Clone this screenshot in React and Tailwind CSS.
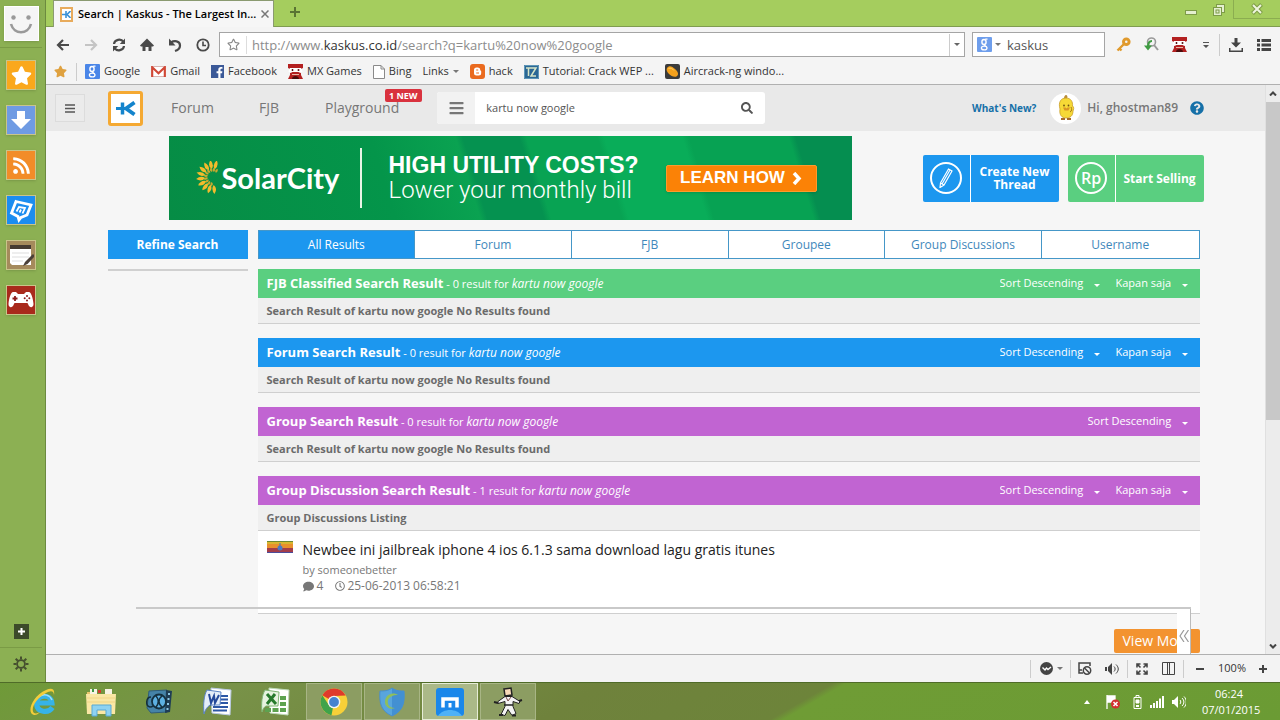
import {
  FaBars,
  FaComment,
  FaFacebookF,
  FaQuestionCircle,
  FaRegClock,
  FaRegStar,
  FaRss,
  FaSearch,
  FaStar,
} from "react-icons/fa"

function Caret({ className = "" }) {
  return (
    <svg viewBox="0 0 6 3" className={`w-[6px] h-[3px] shrink-0 ${className}`} fill="currentColor" aria-hidden="true">
      <path d="M0 0h6L3 3z" />
    </svg>
  )
}

function GoogleIcon({ className }) {
  return (
    <svg viewBox="0 0 15 15" className={className} aria-hidden="true">
      <rect width="15" height="15" rx="1" fill="#4a86e8" />
      <ellipse cx="7" cy="5" rx="2.1" ry="2.5" fill="none" stroke="#fff" strokeWidth="1.4" />
      <path d="M8.2 2.2h2.3M7.6 7.6c-.9.8 1.4 1.2 1.9 2.4" stroke="#fff" strokeWidth="1.2" fill="none" />
      <ellipse cx="7.2" cy="11" rx="2.8" ry="1.9" fill="none" stroke="#fff" strokeWidth="1.3" />
    </svg>
  )
}

function GmailIcon() {
  return (
    <svg viewBox="0 0 15 11" className="w-[15px] h-[11px]" aria-hidden="true">
      <rect x=".5" y=".5" width="14" height="10" fill="#fff" stroke="#d9b5b2" />
      <path d="M1.2 11V1.2l6.3 6 6.3-6V11" fill="none" stroke="#d14836" strokeWidth="2.1" />
    </svg>
  )
}

function MxIcon() {
  return (
    <svg viewBox="0 0 15 15" className="w-[15px] h-[15px]" aria-hidden="true">
      <path d="M0 0h15v4l-2 1v6l2 4H0l2-4V5L0 4z" fill="#b32020" />
      <path d="M2 4h11l1.5 3.5-2 1.5-2-1h-6l-2 1L.5 7.5z" fill="#fff" />
      <path d="M3.5 6h2M4.5 5v2" stroke="#5a1111" />
      <circle cx="10.5" cy="6" r="1" fill="#5a1111" />
      <path d="M4 15c0-4 7-4 7 0z" fill="#4a0c0c" />
      <path d="M4 10.5h7" stroke="#e9b9a8" />
    </svg>
  )
}

function PageIcon() {
  return (
    <svg viewBox="0 0 12 14" className="w-3 h-[14px]" fill="#fff" stroke="#8a8a8a" aria-hidden="true">
      <path d="M.5.5H8L11.5 4v9.5H.5zM8 .5V4h3.5" />
    </svg>
  )
}

function BloggerIcon() {
  return (
    <svg viewBox="0 0 15 15" className="w-[15px] h-[15px]" aria-hidden="true">
      <rect width="15" height="15" rx="3" fill="#ea6a1e" />
      <path d="M4 6a2.5 2.5 0 0 1 2.5-2.5H8A2.5 2.5 0 0 1 10.3 6c0 .8.9.6.9 1.4V9a2.5 2.5 0 0 1-2.5 2.5H6.5A2.5 2.5 0 0 1 4 9z" fill="#fff" />
      <path d="M6.2 6h2M6.2 9H9" stroke="#ea6a1e" strokeWidth="1.2" />
    </svg>
  )
}

function TutorialIcon() {
  return (
    <svg viewBox="0 0 15 14" className="w-[15px] h-[14px]" aria-hidden="true">
      <rect width="15" height="14" fill="#2b6795" />
      <path d="M2 3h10L7 11h5M4.5 3v8" stroke="#d7e6c8" strokeWidth="1.5" fill="none" />
      <path d="M.5.5h14v13H.5z" fill="none" stroke="#5e97b8" />
    </svg>
  )
}

function AircrackIcon() {
  return (
    <svg viewBox="0 0 15 15" className="w-[15px] h-[15px]" aria-hidden="true">
      <rect width="15" height="15" rx="2" fill="#3b3b3b" />
      <path d="M2 4c2-3 5-2 8 1s4 5 2 7-6 0-8-2-3-4-2-6z" fill="#f5a11c" />
      <path d="M3.5 4.5c2-1 4 0 5.5 2" stroke="#fcd36b" fill="none" />
    </svg>
  )
}

const bookmarks = [
  { text: "Google", icon: <GoogleIcon className="w-[15px] h-[15px]" /> },
  { text: "Gmail", icon: <GmailIcon /> },
  {
    text: "Facebook",
    icon: (
      <span className="w-[13px] h-[13px] bg-[#3b5998] flex items-end justify-end overflow-hidden">
        <FaFacebookF className="text-white w-[9px] h-[11px]" />
      </span>
    ),
  },
  { text: "MX Games", icon: <MxIcon /> },
  { text: "Bing", icon: <PageIcon /> },
  { text: "Links", folder: true },
  { text: "hack", icon: <BloggerIcon /> },
  { text: "Tutorial: Crack WEP ...", icon: <TutorialIcon /> },
  { text: "Aircrack-ng windo...", icon: <AircrackIcon /> },
]

const navIcons = [
  {
    name: "Back",
    art: <path d="M8 3L3 8l5 5M3.5 8H14" />,
  },
  {
    name: "Forward",
    muted: true,
    art: <path d="M8 3l5 5-5 5M12.5 8H2" />,
  },
  {
    name: "Reload",
    art: (
      <>
        <path d="M3 7c.5-4.500 7-6 9.500-2M13 9c-.5 4.500-7 6-9.500 2" />
        <path d="M14 1.500V7H8.800zM2 14.500V9h5.200z" fill="currentColor" stroke="none" />
      </>
    ),
  },
  {
    name: "Home",
    art: (
      <>
        <path d="M1 8.500L8 1.500l7 7-1 1H2z" fill="currentColor" stroke="none" />
        <path d="M3.500 9v5h3v-4h3v4h3V9z" fill="currentColor" stroke="none" />
      </>
    ),
  },
  {
    name: "Undo",
    art: (
      <>
        <path d="M4 5.500c3-2 9-2 9 3 0 3-2 4.500-5 5.500" />
        <path d="M2 1.500v7h6.500z" fill="currentColor" stroke="none" />
      </>
    ),
  },
  {
    name: "History",
    art: (
      <>
        <circle cx="8" cy="8" r="5.700" strokeWidth="1.800" />
        <path d="M8 4.500v4h3" strokeWidth="1.600" />
      </>
    ),
  },
]

function SideTile({ label, className, children }) {
  return (
    <button
      type="button"
      aria-label={label}
      className={`w-[30px] h-[30px] border border-[#c9c58a] shadow flex items-center justify-center ${className}`}
    >
      {children}
    </button>
  )
}

function SideBar() {
  return (
    <aside className="w-[46px] shrink-0 bg-[#8cb053] border-r border-[#6c8a3f] flex flex-col items-center pr-[3px]">
      <button type="button" aria-label="Account" className="mt-1.5 w-[35px] h-[35px] bg-[#f5f5f5] border border-white shadow flex items-center justify-center">
        <svg viewBox="0 0 30 30" className="w-[30px] h-[30px]">
          <circle cx="7.5" cy="8.5" r="2.2" fill="#999" />
          <circle cx="22.5" cy="8.5" r="2.2" fill="#999" />
          <path d="M5 15c3 11 17 11 20 0" fill="none" stroke="#999" strokeWidth="2.6" />
        </svg>
      </button>
      <div className="mt-[6px] mb-3 w-full h-px bg-[#7a9b45]" />
      <div className="flex flex-col gap-[15px]">
        <SideTile label="Favorites" className="bg-[#faa81c]">
          <FaStar className="text-white w-[21px] h-[21px]" />
        </SideTile>
        <SideTile label="Downloads" className="bg-[#6f9be3]">
          <svg viewBox="0 0 20 20" className="w-5 h-5" fill="#fff">
            <path d="M6 1h8v8h6L10 19 0 9h6z" />
          </svg>
        </SideTile>
        <SideTile label="RSS Reader" className="bg-[#f28c28]">
          <FaRss className="text-white w-[19px] h-[19px]" />
        </SideTile>
        <SideTile label="Sky Note" className="bg-[#1b8df0]">
          <svg viewBox="0 0 26 26" className="w-[26px] h-[26px]" fill="none" stroke="#fff">
            <path d="M8 4.500L23 8l-4 10-6 2.500-2 2.500-1-3.500L3.500 16z" strokeWidth="2.800" />
            <path d="M8.500 14.500L11 10l6 1-2.500 5.500M11.500 15.500l1.500-3" strokeWidth="1.800" />
          </svg>
        </SideTile>
        <SideTile label="Notes" className="bg-[#a58a5c]">
          <svg viewBox="0 0 26 26" className="w-[26px] h-[26px]">
            <path d="M2 4h21v19H4l-2-2z" fill="#fff" />
            <path d="M2 3h21v4H2z" fill="#453a32" />
            <path d="M4 11h17M4 15h17M4 19h11" stroke="#ddd" />
            <path d="M25 12l-8 8-2 4 4.500-2 7.500-8z" fill="#4b4038" />
          </svg>
        </SideTile>
        <SideTile label="Games" className="bg-[#a92a1c]">
          <svg viewBox="0 0 26 20" className="w-[26px] h-5">
            <path d="M5 2h3l2 2h6l2-2h3c2 0 4 6 4.500 12 0 4-4 4-5 1l-1-2h-13l-1 2c-1 3-5 3-5-1C1 8 3 2 5 2z" fill="#fff" />
            <path d="M4.500 8.500h5M7 6v5" stroke="#8c1d1d" strokeWidth="1.800" />
            <g fill="#8c1d1d">
              <circle cx="19" cy="6" r="1" />
              <circle cx="19" cy="10.500" r="1" />
              <circle cx="16.700" cy="8.300" r="1" />
              <circle cx="21.300" cy="8.300" r="1" />
            </g>
          </svg>
        </SideTile>
      </div>
      <button type="button" aria-label="Add" className="mt-auto w-[15px] h-[15px] bg-[#3c4a2a] flex items-center justify-center">
        <svg viewBox="0 0 9 9" className="w-[9px] h-[9px]" stroke="#fff" strokeWidth="2">
          <path d="M1 4.500h7M4.500 1v7" />
        </svg>
      </button>
      <div className="mt-2 w-full h-px bg-[#7a9b45]" />
      <button type="button" aria-label="Settings" className="mt-2 mb-[10px] h-4">
        <svg viewBox="0 0 16 16" className="w-4 h-4" fill="none" stroke="#46502f">
          <circle cx="8" cy="8" r="3.900" strokeWidth="1.800" />
          <path
            d="M8 .5v3M8 12.500v3M.5 8h3M12.500 8h3M2.700 2.700l2.100 2.100M11.200 11.200l2.100 2.100M13.300 2.700l-2.100 2.100M4.800 11.200l-2.100 2.100"
            strokeWidth="2"
          />
        </svg>
      </button>
    </aside>
  )
}

function TitleBar() {
  return (
    <div className="h-[27px] bg-[#a5cd5e] flex items-stretch">
      <div className="w-[7px] border-b border-[#7f9c50]" />
      <div className="w-[221px] bg-[#f6f6f6] border-x border-t border-[#8a9a70] flex items-center pl-1.5 pr-2 gap-[5px]">
        <span className="w-[15px] h-[15px] border-2 border-[#e8ab5c] bg-white flex items-center justify-center">
          <svg viewBox="0 0 9 7" className="w-[9px] h-[7px]" fill="none" stroke="#3c92d6" strokeWidth="1.600">
            <path d="M0 3.500h5M4 0v7M8.500 0L5 3.500 8.500 7" />
          </svg>
        </span>
        <span className="flex-1 text-[11px] font-semibold text-black whitespace-nowrap">Search | Kaskus - The Largest In...</span>
        <button type="button" aria-label="Close tab" className="text-[#777]">
          <svg viewBox="0 0 8 8" className="w-2 h-2" stroke="currentColor" strokeWidth="1.500">
            <path d="M.5.5l7 7M7.500.5l-7 7" />
          </svg>
        </button>
      </div>
      <div className="flex-1 border-b border-[#7f9c50] flex items-start">
        <button type="button" aria-label="New tab" className="ml-4 mt-[7px]">
          <svg viewBox="0 0 10 10" className="w-[10px] h-[10px]" stroke="#5a7433" strokeWidth="2">
            <path d="M0 5h10M5 0v10" />
          </svg>
        </button>
        <div className="ml-auto flex items-start text-[#7d9b48]">
          <button type="button" aria-label="Minimize" className="mt-[10px] mr-4 w-3 h-[5px] border border-[#7d9b48] bg-[#e4efcf]" />
          <button type="button" aria-label="Restore" className="mt-1 mr-2">
            <svg viewBox="0 0 12 12" className="w-3 h-3" fill="#e4efcf" stroke="currentColor">
              <rect x="3.500" y=".5" width="8" height="8" />
              <rect x=".5" y="3.500" width="8" height="8" />
              <rect x="3" y="6" width="3" height="3" />
            </svg>
          </button>
          <button type="button" aria-label="Close window" className="w-[47px] h-[19px] border-l border-b border-[#8bad50] flex items-center justify-center">
            <svg viewBox="0 0 12 12" className="w-3 h-3">
              <path d="M1.500 1.500l9 9M10.500 1.500l-9 9" stroke="#7d9b48" strokeWidth="4" />
              <path d="M2 2l8 8M10 2l-8 8" stroke="#eef6dd" strokeWidth="2" />
            </svg>
          </button>
        </div>
      </div>
    </div>
  )
}

function ToolBar() {
  return (
    <div className="h-8 flex items-center pt-[3px] pl-[9px] pr-[9px] text-[#444]">
      <div className="flex items-center gap-3 mr-2">
        {navIcons.map((item) => (
          <button key={item.name} type="button" aria-label={item.name} className={item.muted ? "text-[#c4c4c4]" : "text-[#4a4a4a]"}>
            <svg viewBox="0 0 16 16" className="w-4 h-4" fill="none" stroke="currentColor" strokeWidth="2.200">
              {item.art}
            </svg>
          </button>
        ))}
      </div>
      <div className="flex-1 h-[25px] bg-white border border-[#a5a5a5] flex items-center">
        <button type="button" aria-label="Bookmark this page" className="w-[26px] flex justify-center text-[#888]">
          <FaRegStar className="w-[13px] h-[13px]" />
        </button>
        <div className="w-px h-[18px] bg-[#ddd]" />
        <a href="#url" className="flex-1 pl-[5px] text-[13px] leading-5 text-[#8c8c8c] whitespace-nowrap">
          http://www.<span className="text-[#333]">kaskus.co.id</span>/search?q=kartu%20now%20google
        </a>
        <button type="button" aria-label="Show addresses" className="w-[15px] h-[22px] border-l border-[#ccc] flex items-center justify-center text-[#666]">
          <Caret />
        </button>
      </div>
      <div className="ml-[7px] w-[133px] h-[25px] bg-white border border-[#a5a5a5] flex items-center pl-1">
        <GoogleIcon className="w-[15px] h-[15px] opacity-80" />
        <Caret className="ml-[3px] text-[#777]" />
        <input
          aria-label="Web search"
          defaultValue="kaskus"
          className="pl-[6px] min-w-0 flex-1 bg-transparent text-[13px] leading-5 text-[#555] outline-none"
        />
      </div>
      <div className="ml-[11px] flex items-center">
        <button type="button" aria-label="Passwords" className="mr-[13px]">
          <svg viewBox="0 0 15 15" className="w-[15px] h-[15px]" fill="none" stroke="#e09a2d">
            <circle cx="10.300" cy="4.700" r="2.800" strokeWidth="3" />
            <path d="M8 7l-6.500 6.500M3.500 11.500l2 2" strokeWidth="2.400" />
          </svg>
        </button>
        <button type="button" aria-label="Find resources" className="mr-[13px]">
          <svg viewBox="0 0 15 15" className="w-[15px] h-[15px]" fill="none">
            <circle cx="7.500" cy="5" r="4" stroke="#999" strokeWidth="1.600" />
            <path d="M10 8l4 5" stroke="#999" strokeWidth="2" />
            <path d="M8 4C5 4 4 6 4 10" stroke="#3f9b42" strokeWidth="2.200" />
            <path d="M0 8.500h8l-4 5z" fill="#3f9b42" />
          </svg>
        </button>
        <button type="button" aria-label="MX Games" className="mr-4">
          <MxIcon />
        </button>
        <button type="button" aria-label="More tools" className="mr-[10px]">
          <svg viewBox="0 0 6 6" className="w-1.5 h-1.5" fill="#555">
            <path d="M0 0h6v1H0zM0 3h6L3 6z" />
          </svg>
        </button>
        <div className="w-px h-[22px] bg-[#ccc] mr-[9px]" />
        <button type="button" aria-label="Download" className="mr-[14px]">
          <svg viewBox="0 0 14 14" className="w-[14px] h-[14px]" fill="#444">
            <path d="M5.500 0h3v4.500H12l-5 5-5-5h3.500zM0 10h1.500v2.500h11V10H14v4H0z" />
          </svg>
        </button>
        <button type="button" aria-label="Menu">
          <svg viewBox="0 0 14 12" className="w-[14px] h-3" fill="#444">
            <path d="M0 0h3v3H0zM4.500 0H14v3H4.500zM0 4.500h3v3H0zM4.500 4.500H14v3H4.500zM0 9h3v3H0zM4.500 9H14v3H4.500z" />
          </svg>
        </button>
      </div>
    </div>
  )
}

function BookmarkBar() {
  return (
    <div className="h-[25px] flex items-center pl-2 text-[11px] text-[#333]">
      <FaStar className="text-[#dfa13f] w-[13px] h-[13px]" />
      <div className="ml-[9px] mr-2 w-px h-[18px] bg-[#ccc]" />
      <nav className="flex items-center gap-[11px]">
        {bookmarks.map((item) => (
          <a key={item.text} href="#bookmark" className="flex items-center gap-1 whitespace-nowrap">
            {item.icon}
            {item.text}
            {item.folder && <Caret className="text-[#777]" />}
          </a>
        ))}
      </nav>
    </div>
  )
}

function SiteHeader() {
  return (
    <header className="h-[46px] bg-[#e9e9e9] flex items-center pl-[9px] pr-[61px] text-[#777]">
      <button type="button" aria-label="Menu" className="w-[30px] h-[28px] border border-[#dcdcdc] bg-[#ebebeb] flex items-center justify-center">
        <svg viewBox="0 0 10 9" className="w-[10px] h-[9px]" stroke="#555" strokeWidth="1.400">
          <path d="M0 1h10M0 4.500h10M0 8h10" />
        </svg>
      </button>
      <a href="#home" aria-label="Kaskus" className="ml-[23px] w-[35px] h-[35px] rounded-[3px] border-[3px] border-[#f5a932] bg-white flex items-center justify-center">
        <svg viewBox="0 0 20 15" className="w-5 h-[15px]" fill="none" stroke="#1484cc">
          <path d="M0 7.500h9" strokeWidth="3" />
          <path d="M6.500 1.500v12" strokeWidth="3.500" />
          <path d="M18.500 1.500L10 7.500l8.500 6" strokeWidth="3.800" />
        </svg>
      </a>
      <nav className="ml-7 flex items-center text-[14px] leading-none">
        <a href="#forum" className="w-[88px]">Forum</a>
        <a href="#fjb" className="w-[66px]">FJB</a>
        <a href="#playground" className="relative">
          Playground
          <span className="absolute left-[60px] -top-3 h-[13px] px-1 rounded-[2px] bg-[#d9323e] text-white text-[9px] leading-[13px] font-bold whitespace-nowrap">
            1 NEW
          </span>
        </a>
      </nav>
      <form className="ml-[38px] w-[328px] h-8 rounded-[3px] bg-white flex items-center overflow-hidden" onSubmit={(e) => e.preventDefault()}>
        <button type="button" aria-label="Categories" className="w-[38px] h-full bg-[#f2f2f2] flex items-center justify-center">
          <FaBars className="w-[15px] h-4 text-[#777]" />
        </button>
        <input
          aria-label="Search Kaskus"
          defaultValue="kartu now google"
          className="flex-1 min-w-0 pl-[11px] text-[11px] text-[#555] outline-none"
        />
        <button type="submit" aria-label="Search" className="mr-3">
          <FaSearch className="w-3 h-3 text-[#555]" />
        </button>
      </form>
      <div className="ml-auto flex items-center">
        <a href="#new" className="text-[10px] font-bold text-[#1670a8]">What's New?</a>
        <span className="ml-[14px] w-[31px] h-[31px] rounded-full bg-white flex items-center justify-center">
          <svg viewBox="0 0 20 26" className="w-5 h-[26px]">
            <path d="M8 4c0-3 1-4 2-4s2 1 1 4z" fill="#b98c3c" />
            <path d="M4 14C2 7 5 3 10 3s7 4 6.500 8c2 1 1 4 .5 5 0 5-3 7-7 7s-7-3-6-9z" fill="#f6d936" stroke="#c99d28" strokeWidth=".8" />
            <path d="M7 12.500h2.500l1 1 1-1H14l-1.500 3h-4z" fill="#d99525" />
            <circle cx="8" cy="10.500" r=".9" fill="#6e5314" />
            <circle cx="12.500" cy="10.500" r=".9" fill="#6e5314" />
            <path d="M14 17c2-1 2-3 1-5" fill="none" stroke="#a5781d" />
            <path d="M5 24h4M11 24h4" stroke="#a76b2a" strokeWidth="2" />
          </svg>
        </span>
        <a href="#profile" className="ml-[6px] text-[12px] leading-4 font-semibold">Hi, ghostman89</a>
        <FaQuestionCircle className="ml-3 w-[14px] h-[14px] text-[#1670a8]" />
      </div>
    </header>
  )
}

const petals = [85, 107, 129, 151, 173, 195, 217, 239, 261, 283]

function SunLogo() {
  return (
    <svg viewBox="0 0 32 34" className="w-8 h-[34px] shrink-0" aria-hidden="true">
      {petals.map((angle) => (
        <g key={angle} transform={`rotate(${angle} 20 16)`}>
          <path d="M28 16q4-4 9 0-5 3.500-9 0z" fill="#f3bb2c" />
          <path d="M25 16.800q2-2.800 4.500 0-2.500 2-4.500 0z" fill="#c9a92f" transform="rotate(11 20 16)" />
        </g>
      ))}
    </svg>
  )
}

function Banner() {
  return (
    <a
      href="#ad"
      className="w-[683px] h-[84px] overflow-hidden flex items-center pl-6 pr-[35px] bg-[linear-gradient(73deg,#068c45_0%,#04954a_32%,#0aa251_44%,#059250_45%,#059250_53%,#08a353_54%,#08a353_64%,#09ad59_65%,#09ad59_76%,#07a253_77%,#07a253_91%,#058e50_92%)] text-white"
    >
      <SunLogo />
      <span className="-ml-[3px] font-['Lato',sans-serif] font-bold text-[29px] leading-[34px] w-[113px] whitespace-nowrap">SolarCity</span>
      <span className="ml-[25px] w-[2px] h-[60px] bg-[#e9f5e6]" />
      <span className="ml-[27px] flex flex-col font-['Liberation_Sans',sans-serif] whitespace-nowrap">
        <span className="text-[23px] leading-[25px] font-bold">HIGH UTILITY COSTS?</span>
        <span className="text-[24px] leading-[25px] font-['Roboto',sans-serif] font-light">Lower your monthly bill</span>
      </span>
      <span className="ml-auto w-[151px] h-[27px] rounded-[2px] bg-[#fb8206] shadow border border-[#fd9a2c] flex items-center justify-center gap-[7px] font-['Liberation_Sans',sans-serif] font-bold text-[17px] whitespace-nowrap">
        LEARN HOW
        <svg viewBox="0 0 10 13" className="w-[10px] h-[13px]" fill="none" stroke="#fff" strokeWidth="3.500">
          <path d="M2 1l5 5.500L2 12" />
        </svg>
      </span>
    </a>
  )
}

function ActionButton({ className, icon, children }) {
  return (
    <button type="button" className={`w-[136px] h-[47px] rounded-[2px] text-white flex items-stretch ${className}`}>
      <span className="w-12 border-r border-white flex items-center justify-center">
        <span className="w-8 h-8 rounded-full border-2 border-white flex items-center justify-center text-[16px] font-semibold">{icon}</span>
      </span>
      <span className="flex-1 flex items-center justify-center text-center text-[12px] leading-[13px] font-bold">{children}</span>
    </button>
  )
}

const tabs = ["All Results", "Forum", "FJB", "Groupee", "Group Discussions", "Username"]

function FilterSelect({ label, value }) {
  return (
    <label className="flex items-center">
      <select aria-label={label} className="appearance-none bg-transparent outline-none" defaultValue={value}>
        <option>{value}</option>
      </select>
      <Caret className="ml-[10px] mt-[3px]" />
    </label>
  )
}

function ResultPanel({ title, count, color, note, period = true, children }) {
  return (
    <section className="mb-[14px]">
      <div className={`h-[29px] pl-[9px] pr-3 flex items-center text-white ${color}`}>
        <h2 className="text-[12px] leading-5">
          <strong className="text-[13px] font-bold">{title}</strong>
          <span className="text-[11px]"> - {count} result for </span>
          <em>kartu now google</em>
        </h2>
        <div className="ml-auto flex gap-4 text-[11px]">
          <FilterSelect label={`${title} order`} value="Sort Descending" />
          {period && <FilterSelect label={`${title} period`} value="Kapan saja" />}
        </div>
      </div>
      <p className="h-[26px] leading-[25px] pl-[9px] bg-[#efefef] border-b border-[#cfcfcf] text-[11px] font-bold text-[#6b6b6b]">{note}</p>
      {children}
    </section>
  )
}

function SearchPage() {
  const emptyNote = "Search Result of kartu now google No Results found"

  return (
    <div className="relative flex-1 min-w-0 bg-[#f6f6f6] overflow-hidden">
      <SiteHeader />
      <main className="max-w-[1096px] mx-auto pt-[5px]">
        <div className="flex items-center pl-[61px]">
          <Banner />
          <div className="ml-auto flex gap-[9px]">
            <ActionButton
              className="bg-[#1c97ef]"
              icon={
                <svg viewBox="0 0 14 20" className="w-[14px] h-5" fill="none" stroke="#fff" strokeWidth="1.200">
                  <path d="M9.500 1l3.500 2-8 14-4 2.500.5-4.500zM11 2L3 16M1.500 15L5 17" />
                </svg>
              }
            >
              Create New Thread
            </ActionButton>
            <ActionButton className="bg-[#5acf80]" icon="Rp">Start Selling</ActionButton>
          </div>
        </div>
        <div className="mt-[10px] pr-1 flex gap-[10px]">
          <div className="w-[140px] shrink-0">
            <h1 className="h-[29px] leading-[29px] bg-[#1c97ef] text-white text-[12px] font-bold text-center">Refine Search</h1>
            <div className="mt-[10px] h-0.5 bg-[#d0d0d0]" />
          </div>
          <div className="flex-1 min-w-0">
            <nav className="grid grid-cols-6 h-[29px] border border-[#4597c8] divide-x divide-[#4597c8] bg-white text-[12px] text-center leading-[27px]">
              {tabs.map((tab, i) => (
                <a key={tab} href="#tab" className={i === 0 ? "bg-[#1c97ef] text-white" : "text-[#3f88bb]"}>
                  {tab}
                </a>
              ))}
            </nav>
            <div className="mt-[10px]">
              <ResultPanel title="FJB Classified Search Result" count={0} color="bg-[#5acf80]" note={emptyNote} />
              <ResultPanel title="Forum Search Result" count={0} color="bg-[#1c97ef]" note={emptyNote} />
              <ResultPanel title="Group Search Result" count={0} color="bg-[#c164d2]" note={emptyNote} period={false} />
              <ResultPanel title="Group Discussion Search Result" count={1} color="bg-[#c164d2]" note="Group Discussions Listing">
                <article className="h-[83px] pl-[9px] pt-[10px] bg-white border-b border-[#cfcfcf] flex gap-[10px]">
                  <svg viewBox="0 0 26 12" className="w-[26px] h-3" aria-hidden="true">
                    <rect width="26" height="12" fill="#e8902c" />
                    <rect width="26" height="3" fill="#d8b52f" />
                    <rect y="7" width="26" height="5" fill="#a33d4a" />
                    <rect y="11" width="26" height="1" fill="#4b4c9b" />
                    <path d="M0 0h26v1H0z" fill="#6a8a35" />
                    <circle cx="13" cy="7" r="2.500" fill="#4a79c4" />
                    <path d="M13 2v3" stroke="#3d70bf" />
                  </svg>
                  <div className="text-[#777] text-[11px] leading-4">
                    <h3 className="text-[14px] leading-[18px] text-[#222]">
                      <a href="#thread">Newbee ini jailbreak iphone 4 ios 6.1.3 sama download lagu gratis itunes</a>
                    </h3>
                    <p className="mt-[3px]">by someonebetter</p>
                    <p className="flex items-center text-[12px]">
                      <FaComment className="w-[11px] h-[11px] mr-[3px]" />4
                      <FaRegClock className="w-[10px] h-[10px] ml-3 mr-0.5" />
                      25-06-2013 06:58:21
                    </p>
                  </div>
                </article>
              </ResultPanel>
            </div>
            <div className="flex justify-end pt-px">
              <button type="button" className="w-[86px] h-6 pl-[9px] rounded-[2px] bg-[#f39330] text-white text-[14px] text-left leading-6">
                View More
              </button>
            </div>
          </div>
        </div>
      </main>
      {/* collapsed toolbar of the site, floats over the results */}
      <div className="absolute bottom-0 left-[90px] right-[74px] h-[47px] border-t-2 border-[#c9c9c9] flex justify-end pointer-events-none">
        <button type="button" aria-label="Expand toolbar" className="w-[14px] bg-white border-r border-[#bbb] flex items-center justify-center pt-2">
          <svg viewBox="0 0 10 12" className="w-[10px] h-3" fill="none" stroke="#999" strokeWidth="1.200">
            <path d="M5 0L1 6l4 6M9.500 0l-4 6 4 6" />
          </svg>
        </button>
      </div>
    </div>
  )
}

function ScrollBar() {
  return (
    <div className="w-[15px] shrink-0 bg-[#ececec] border-l border-[#e0e0e0] flex flex-col items-center text-[#444]">
      <svg viewBox="0 0 8 5" className="w-2 h-[5px] my-[6px]" fill="none" stroke="currentColor" strokeWidth="2">
        <path d="M1 4.500l3-3 3 3" />
      </svg>
      <div className="w-full h-[318px] bg-[#c8c8c8]" />
      <svg viewBox="0 0 8 5" className="w-2 h-[5px] mt-auto mb-[5px]" fill="none" stroke="currentColor" strokeWidth="2">
        <path d="M1 .5l3 3 3-3" />
      </svg>
    </div>
  )
}

function StatusBar() {
  return (
    <div className="h-7 bg-[#f3f3f3] border-t border-[#b0b0b0] flex items-center justify-end pr-[13px] text-[#444]">
      <div className="w-px h-[18px] bg-[#ccc] mr-[9px]" />
      <button type="button" aria-label="Network boost" className="flex items-center gap-1">
        <svg viewBox="0 0 13 13" className="w-[13px] h-[13px]">
          <circle cx="6.500" cy="6.500" r="6.500" fill="#444" />
          <path d="M2.500 5.500L5 8l1.500-2 1.500 1.500L11 5" fill="none" stroke="#fff" strokeWidth="1.400" />
        </svg>
        <Caret className="text-[#777]" />
      </button>
      <div className="w-px h-[18px] bg-[#ccc] mx-[7px]" />
      <button type="button" aria-label="Ad blocker" className="mr-[13px]">
        <svg viewBox="0 0 14 13" className="w-[14px] h-[13px]" fill="none" stroke="currentColor" strokeWidth="1.500">
          <path d="M12 4V1H1v10h4M1 8h3" />
          <circle cx="9" cy="8.500" r="3.700" />
          <path d="M6.500 6l5 5" />
        </svg>
      </button>
      <button type="button" aria-label="Sound">
        <svg viewBox="0 0 14 12" className="w-[14px] h-3" fill="none" stroke="currentColor">
          <path d="M0 4h2v4H0zM3 4l4-4v12L3 8z" fill="currentColor" stroke="none" />
          <path d="M9 3.500c1.500 1.500 1.500 3.500 0 5M11 1.500c3 3 3 6 0 9" />
        </svg>
      </button>
      <div className="w-px h-[18px] bg-[#ccc] mx-2" />
      <button type="button" aria-label="Full screen" className="mr-[14px]">
        <svg viewBox="0 0 12 12" className="w-3 h-3" fill="none" stroke="currentColor" strokeWidth="1.600">
          <path d="M1 4.500V1h3.500M7.500 1H11v3.500M11 7.500V11H7.500M4.500 11H1V7.500M1 1l3.500 3.500M11 1L7.500 4.500M11 11L7.500 7.500M1 11l3.500-3.500" />
        </svg>
      </button>
      <button type="button" aria-label="Split screen">
        <svg viewBox="0 0 13 13" className="w-[13px] h-[13px]" fill="none" stroke="currentColor">
          <path d="M.5.5h12v12H.5zM5.500.5v12M7.500.5v12" />
        </svg>
      </button>
      <div className="w-px h-[18px] bg-[#ccc] ml-2 mr-3" />
      <button type="button" aria-label="Zoom out">
        <svg viewBox="0 0 8 8" className="w-2 h-2" stroke="currentColor" strokeWidth="2">
          <path d="M0 4h8" />
        </svg>
      </button>
      <span className="w-[48px] ml-1 mr-[3px] text-center text-[11px] text-[#333]">100%</span>
      <button type="button" aria-label="Zoom in">
        <svg viewBox="0 0 8 8" className="w-2 h-2" stroke="currentColor" strokeWidth="2">
          <path d="M0 4h8M4 0v8" />
        </svg>
      </button>
    </div>
  )
}

function ExplorerLogo() {
  return (
    <svg viewBox="0 0 30 30" className="w-[30px] h-[30px]">
      <path d="M24.500 20.500c-4 6-15.500 5-16-3.500C8 7.500 23 6 24 16H11" fill="none" stroke="#36b3e8" strokeWidth="5" />
      <path d="M24 13c-2-5-8-7-13-3" fill="none" stroke="#9fe0fa" strokeWidth="1.500" />
      <path d="M6 28C-2 26 4 9 18 3c6-2.500 9-1 8 5-.5-5-4-4-8-2C8 11 2 22 6 26c2 1 4 0 6-1-2 2-4 3.500-6 3z" fill="#f3cd3a" />
    </svg>
  )
}

function FolderLogo() {
  return (
    <svg viewBox="0 0 30 30" className="w-[30px] h-[30px]">
      <path d="M1 5h8l2 2h18v20H1z" fill="#e8c66e" />
      <path d="M4 2h7v5H4zM19 2h7v5h-7z" fill="#f7f3e4" />
      <path d="M12 3h3v3h-3z" fill="#cf3d2e" />
      <path d="M6 2h2v3H6z" fill="#3c9b45" />
      <path d="M0 7h30l-1 20H1z" fill="#fae7a5" />
      <path d="M1 11h28M1 15h28" stroke="#f0d585" />
      <path d="M6 29V18h19v11h-5v-6h-9v6z" fill="#8ed2f1" stroke="#58a9d4" />
    </svg>
  )
}

function MediaLogo() {
  return (
    <svg viewBox="0 0 28 28" className="w-7 h-7">
      <path d="M4 3l18-1v22l-16 1-4-5z" fill="#4583a8" stroke="#2f5c78" />
      <path d="M21 2l6 1-2 21-5 1z" fill="#1f3d55" />
      <path d="M23 5h2v2h-2zM22.500 10h2v2h-2zM22 15h2v2h-2zM21.500 20h2v2h-2z" fill="#8cc6e2" />
      <circle cx="14" cy="13.500" r="7" fill="#5db0e2" stroke="#14303f" strokeWidth="1.800" />
      <path d="M6 9c-5 0-6 9-1 10 2 0 3-1 3-1M17 8c-4 3-4 8 0 11M11 8c3 3 3 8 0 11" fill="none" stroke="#14303f" strokeWidth="1.500" />
    </svg>
  )
}

function OfficeLogo({ color, children }) {
  return (
    <svg viewBox="0 0 30 30" className="w-[30px] h-[30px]">
      <path d="M9 1l20 2-1 25-18-2z" fill="#fff" stroke={color} />
      {children}
    </svg>
  )
}

function ChromeLogo() {
  return (
    <svg viewBox="0 0 28 28" className="w-7 h-7">
      <circle cx="14" cy="14" r="13.500" fill="#f7d038" />
      <path d="M14 14L2.300 7.200A13.500 13.500 0 0 1 25.700 7.500L14 8z" fill="#df3a2c" />
      <path d="M14 14l-2.500 13.200A13.500 13.500 0 0 1 2.300 7.200l6.500 9.800 6 3z" fill="#3fa34a" />
      <circle cx="14" cy="14" r="6.300" fill="#f4f4f4" />
      <circle cx="14" cy="14" r="4.900" fill="#4582cf" />
    </svg>
  )
}

function ShieldLogo() {
  return (
    <svg viewBox="0 0 28 30" className="w-7 h-[30px]">
      <path d="M14 1c4 3 8 3 12 3 1 12-1 20-12 25C3 24 1 16 2 4c4 0 8 0 12-3z" fill="#58a5dd" stroke="#4a8fcb" />
      <path d="M14 1c4 3 8 3 12 3 1 12-1 20-12 25z" fill="#4390d2" />
      <path d="M20 8c-7-4-13 1-13 7 0 5 5 8 10 6-6 0-8-4-7-8 1-3 5-5 10-5z" fill="#8fbf5c" />
    </svg>
  )
}

function MaxthonLogo() {
  return (
    <svg viewBox="0 0 28 28" className="w-7 h-7">
      <rect width="28" height="28" rx="3" fill="#1a87ea" />
      <path d="M2 28c5-8 19-8 24 0z" fill="#4eb1f7" />
      <path d="M7 19.500V11h14v8.500" fill="none" stroke="#fff" strokeWidth="3.500" />
      <path d="M14 15v4.500" stroke="#fff" strokeWidth="3" />
    </svg>
  )
}

function KarateLogo() {
  return (
    <svg viewBox="0 0 30 30" className="w-[30px] h-[30px]">
      <path d="M11 2l7-1 1 7-7 1z" fill="#f7d9b8" stroke="#222" strokeWidth="1.500" />
      <path d="M12 9.500h7l8 5-1 2-6-2v5l3 7-4 2-4-6-3 6-4-1 4-8v-5l-7 2v-2z" fill="#f3f3f3" stroke="#222" />
      <path d="M11 18h9" stroke="#222" strokeWidth="1.500" />
      <path d="M13 10l2 4 3-4" fill="none" stroke="#7c4c4c" />
      <path d="M1 15l4 1M26 14l3-1M6 28h4M19 28.500h4" stroke="#222" strokeWidth="2" />
    </svg>
  )
}

const pinned = [
  { name: "Internet Explorer", logo: <ExplorerLogo /> },
  { name: "File Explorer", logo: <FolderLogo /> },
  { name: "Media Player", logo: <MediaLogo /> },
  {
    name: "Word",
    logo: (
      <OfficeLogo color="#b9c9e2">
        <path d="M18 9h8M18 12.500h8M18 16h8M11 20h15M11 23.500h14" stroke="#2c57a5" strokeWidth="1.800" />
        <path d="M5 3l14 2-1 13H8c-3 2-5 5-6 9C1 17 2 8 5 3z" fill="#e4edf8" stroke="#5b83c4" />
        <path d="M7 7l2 9 3-7 1 7 4-8" fill="none" stroke="#24499a" strokeWidth="2" />
      </OfficeLogo>
    ),
  },
  {
    name: "Excel",
    logo: (
      <OfficeLogo color="#bcd9b5">
        <path d="M20 9h6v4h-6zM20 15h6v4h-6zM5 21h6v4H5zM12.500 21h6v4h-6zM20 21h6v4h-6z" fill="#5da24f" />
        <path d="M5 3l14 2-1 14H6c-2 1-3 3-4 6C1 16 2 8 5 3z" fill="#e6f3df" stroke="#7fb573" />
        <path d="M7 7l9 10M15 7l-8 10" stroke="#277a2c" strokeWidth="3" />
      </OfficeLogo>
    ),
  },
]

const running = [
  { name: "Chrome", logo: <ChromeLogo /> },
  { name: "Shield", logo: <ShieldLogo /> },
  { name: "Maxthon", logo: <MaxthonLogo />, active: true },
  { name: "Karate", logo: <KarateLogo /> },
]

function TaskBar() {
  return (
    <footer className="h-[38px] shrink-0 border-t border-[#4f6b28] bg-[linear-gradient(150deg,#6f9a38_0%,#789248_18%,#6f823c_45%,#6d843a_62%,#6f9c35_63%,#6b9b34_100%)] flex items-stretch text-white">
      <div className="flex items-center gap-[28px] pl-7">
        {pinned.map((app) => (
          <button key={app.name} type="button" aria-label={app.name} className="w-[30px] flex justify-center">
            {app.logo}
          </button>
        ))}
      </div>
      <div className="flex gap-[2px] ml-4">
        {running.map((app) => (
          <button
            key={app.name}
            type="button"
            aria-label={app.name}
            className={`w-14 border flex items-center justify-center ${
              app.active ? "bg-[#abb988] border-[#e6ecd6]" : "bg-[#8c9d62] border-[#a8b585]"
            }`}
          >
            {app.logo}
          </button>
        ))}
      </div>
      <div className="ml-auto flex items-center pr-6">
        <svg viewBox="0 0 6 4" className="w-1.5 h-1 mr-4" fill="#fff">
          <path d="M3 0l3 4H0z" />
        </svg>
        <svg viewBox="0 0 14 14" className="w-[14px] h-[14px] mr-[13px]">
          <path d="M1 0v14M2 1h7v6H2z" fill="#fff" stroke="#fff" strokeWidth="1.300" />
          <circle cx="9.500" cy="9" r="4.500" fill="#d22f2f" />
          <path d="M7.500 7l4 4M11.500 7l-4 4" stroke="#fff" strokeWidth="1.500" />
        </svg>
        <svg viewBox="0 0 9 14" className="w-[9px] h-[14px] mr-2" fill="none" stroke="#fff">
          <path d="M1 2.500h7v11H1zM3 .5h3v2H3z" />
          <path d="M3 5h3v3H3z" fill="#fff" />
          <path d="M3 11h3" strokeWidth="2" />
        </svg>
        <svg viewBox="0 0 14 12" className="w-[14px] h-3 mr-2" fill="#fff">
          <path d="M0 9h2v3H0zM3 7h2v5H3zM6 5h2v7H6zM9 2.500h2V12H9zM12 0h2v12h-2z" />
        </svg>
        <svg viewBox="0 0 14 12" className="w-[14px] h-3" fill="none" stroke="#fff">
          <path d="M0 4h2l4-4v12L2 8H0z" fill="#fff" stroke="none" />
          <path d="M8 4c1 1 1 3 0 4M10 2c2.500 2.500 2.500 5.500 0 8M12 .5c3 3 3 8 0 11" />
        </svg>
        <time className="ml-4 w-[54px] text-center text-[11px] leading-4 whitespace-nowrap">
          06:24
          <br />
          07/01/2015
        </time>
      </div>
    </footer>
  )
}

export default function App() {
  return (
    <div className="h-screen flex flex-col overflow-hidden font-['Open_Sans',sans-serif]">
      <div className="flex-1 min-h-0 flex">
        <SideBar />
        <div className="flex-1 min-w-0 flex flex-col bg-[#f4f4f4]">
          <TitleBar />
          <ToolBar />
          <BookmarkBar />
          <div className="flex-1 min-h-0 flex border-t border-[#b0b0b0]">
            <SearchPage />
            <ScrollBar />
          </div>
          <StatusBar />
        </div>
      </div>
      <TaskBar />
    </div>
  )
}
